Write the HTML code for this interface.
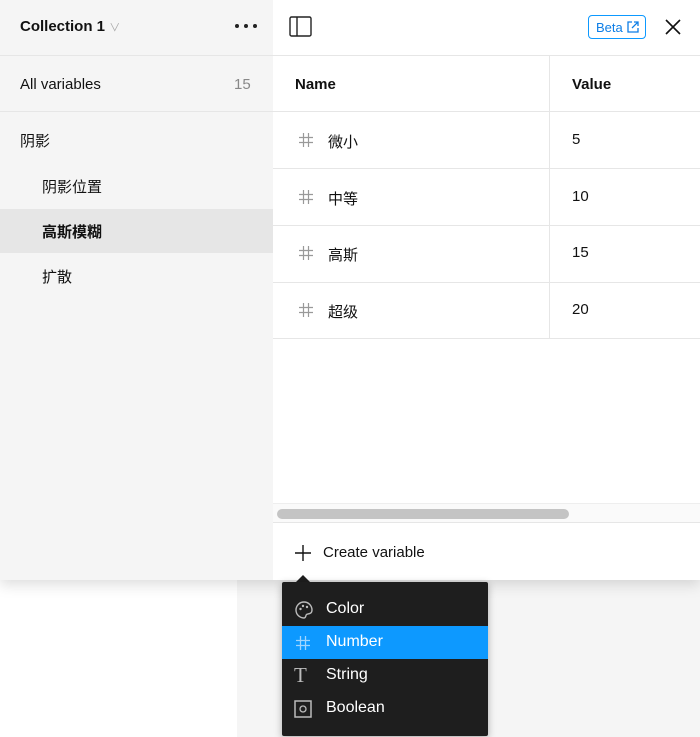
<!DOCTYPE html>
<html><head><meta charset="utf-8"><style>
*{box-sizing:border-box;margin:0;padding:0}
body{width:700px;height:737px;overflow:hidden;position:relative;background:#fff;font-family:"Liberation Sans","Noto Sans CJK SC",sans-serif;color:#111;font-size:15px}
.bgr{position:absolute;left:237px;top:0;width:463px;height:737px;background:#f5f5f5}
.panel{position:absolute;left:0;top:0;width:700px;height:580px;background:#fff;box-shadow:0 4px 14px rgba(0,0,0,.15)}
.side{position:absolute;left:0;top:0;width:273px;height:580px;background:#f5f5f5}
.hl{position:absolute;left:0;right:0;height:1px;background:#e6e6e6}
.t{position:absolute;white-space:nowrap}
.sel{position:absolute;left:0;top:209px;width:273px;height:44px;background:#e6e6e6}
.hash{position:absolute;left:299px}
.menu{position:absolute;left:282px;top:582px;width:206px;height:154px;background:#1e1e1e;border-radius:2px;box-shadow:0 2px 8px rgba(0,0,0,.3)}
.mi{position:absolute;left:0;width:206px;height:33px;color:#fff;font-size:16px}
.mi span{position:absolute;left:44px;top:7px}
</style></head><body>
<div class="bgr"></div>
<div class="panel">
<div class="side">
<div class="t" style="left:20px;top:18px;font-weight:bold;font-size:15px">Collection 1 <span style="color:#aaa;font-weight:normal;font-size:11px">&#8744;</span></div>
<svg style="position:absolute;left:234px;top:23px" width="24" height="6"><circle cx="3" cy="3" r="2" fill="#222"/><circle cx="12" cy="3" r="2" fill="#222"/><circle cx="21" cy="3" r="2" fill="#222"/></svg>
<div class="hl" style="top:55px"></div>
<div class="t" style="left:20px;top:76px">All variables</div>
<div class="t" style="left:234px;top:76px;color:#888">15</div>
<div class="hl" style="top:111px"></div>
<div class="t" style="left:20px;top:130px">阴影</div>
<div class="t" style="left:42px;top:176px">阴影位置</div>
<div class="sel"></div>
<div class="t" style="left:42px;top:221px;font-weight:bold">高斯模糊</div>
<div class="t" style="left:42px;top:266px">扩散</div>
</div>
<svg style="position:absolute;left:289px;top:16px" width="24" height="22"><rect x="1" y="1" width="21" height="19" rx="1.5" fill="none" stroke="#222" stroke-width="1.4"/><line x1="8" y1="1" x2="8" y2="20" stroke="#222" stroke-width="1.4"/></svg>
<div style="position:absolute;left:588px;top:15px;width:58px;height:24px;border:1px solid #0d99ff;border-radius:4px;color:#0d7ee6;font-size:13px;padding:4px 0 0 7px">Beta<svg style="position:absolute;left:38px;top:5px" width="12" height="12"><path d="M5 1H1V11H11V7M7 1H11V5M11 1L5 7" fill="none" stroke="#0d7ee6" stroke-width="1.3"/></svg></div>
<svg style="position:absolute;left:665px;top:19px" width="16" height="16"><path d="M1 1L15 15M15 1L1 15" stroke="#111" stroke-width="1.6"/></svg>
<div class="hl" style="top:55px;left:273px"></div>
<div class="t" style="left:295px;top:76px;font-weight:bold">Name</div>
<div class="t" style="left:572px;top:76px;font-weight:bold">Value</div>
<div class="hl" style="top:111px;left:273px"></div>
<div style="position:absolute;left:549px;top:56px;width:1px;height:282px;background:#e6e6e6"></div>
<svg class="hash" style="top:133px" width="14" height="14"><path d="M4.5 0V14M9.5 0V14M0 4.5H14M0 9.5H14" stroke="#999" stroke-width="1.2"/></svg><div class="t" style="left:328px;top:131px">微小</div><div class="t" style="left:572px;top:131px">5</div>
<div class="hl" style="top:168px;left:273px"></div>
<svg class="hash" style="top:190px" width="14" height="14"><path d="M4.5 0V14M9.5 0V14M0 4.5H14M0 9.5H14" stroke="#999" stroke-width="1.2"/></svg><div class="t" style="left:328px;top:188px">中等</div><div class="t" style="left:572px;top:188px">10</div>
<div class="hl" style="top:225px;left:273px"></div>
<svg class="hash" style="top:246px" width="14" height="14"><path d="M4.5 0V14M9.5 0V14M0 4.5H14M0 9.5H14" stroke="#999" stroke-width="1.2"/></svg><div class="t" style="left:328px;top:244px">高斯</div><div class="t" style="left:572px;top:244px">15</div>
<div class="hl" style="top:282px;left:273px"></div>
<svg class="hash" style="top:303px" width="14" height="14"><path d="M4.5 0V14M9.5 0V14M0 4.5H14M0 9.5H14" stroke="#999" stroke-width="1.2"/></svg><div class="t" style="left:328px;top:301px">超级</div><div class="t" style="left:572px;top:301px">20</div>
<div class="hl" style="top:338px;left:273px"></div>
<div style="position:absolute;left:273px;top:503px;width:427px;height:20px;background:#fafafa;border-top:1px solid #eee;border-bottom:1px solid #e6e6e6"></div>
<div style="position:absolute;left:277px;top:509px;width:292px;height:10px;border-radius:5px;background:#c4c4c4"></div>
<svg style="position:absolute;left:295px;top:545px" width="16" height="16"><path d="M8 0V16M0 8H16" stroke="#111" stroke-width="1.4"/></svg>
<div class="t" style="left:323px;top:544px">Create variable</div>
</div>
<svg style="position:absolute;left:295px;top:575px" width="16" height="8"><path d="M0 8L8 0L16 8Z" fill="#1e1e1e"/></svg>
<div class="menu">
<div class="mi" style="top:11px"><svg style="position:absolute;left:12px;top:7px" width="20" height="20"><path d="M10 2A8 8 0 1 0 10 18C12 18 11.5 15.5 12.5 14.5C13.5 13.5 18 14.5 18 10A8 8 0 0 0 10 2Z" fill="none" stroke="#bbb" stroke-width="1.4"/><circle cx="6.5" cy="9" r="1.2" fill="#bbb"/><circle cx="9" cy="6" r="1.2" fill="#bbb"/><circle cx="13" cy="7" r="1.2" fill="#bbb"/></svg><span>Color</span></div>
<div class="mi" style="top:44px;background:#0d99ff"><svg style="position:absolute;left:14px;top:10px" width="14" height="14"><path d="M4.5 0V14M9.5 0V14M0 4.5H14M0 9.5H14" stroke="#9fd5ff" stroke-width="1.3"/></svg><span>Number</span></div>
<div class="mi" style="top:77px"><span style="left:12px;top:4px;color:#bbb;font-family:'Liberation Serif',serif;font-size:21px">T</span><span>String</span></div>
<div class="mi" style="top:110px"><svg style="position:absolute;left:12px;top:8px" width="18" height="18"><rect x="1" y="1" width="16" height="16" fill="none" stroke="#bbb" stroke-width="1.5"/><circle cx="9" cy="9" r="3" fill="none" stroke="#bbb" stroke-width="1.3"/></svg><span>Boolean</span></div>
</div>
</body></html>
